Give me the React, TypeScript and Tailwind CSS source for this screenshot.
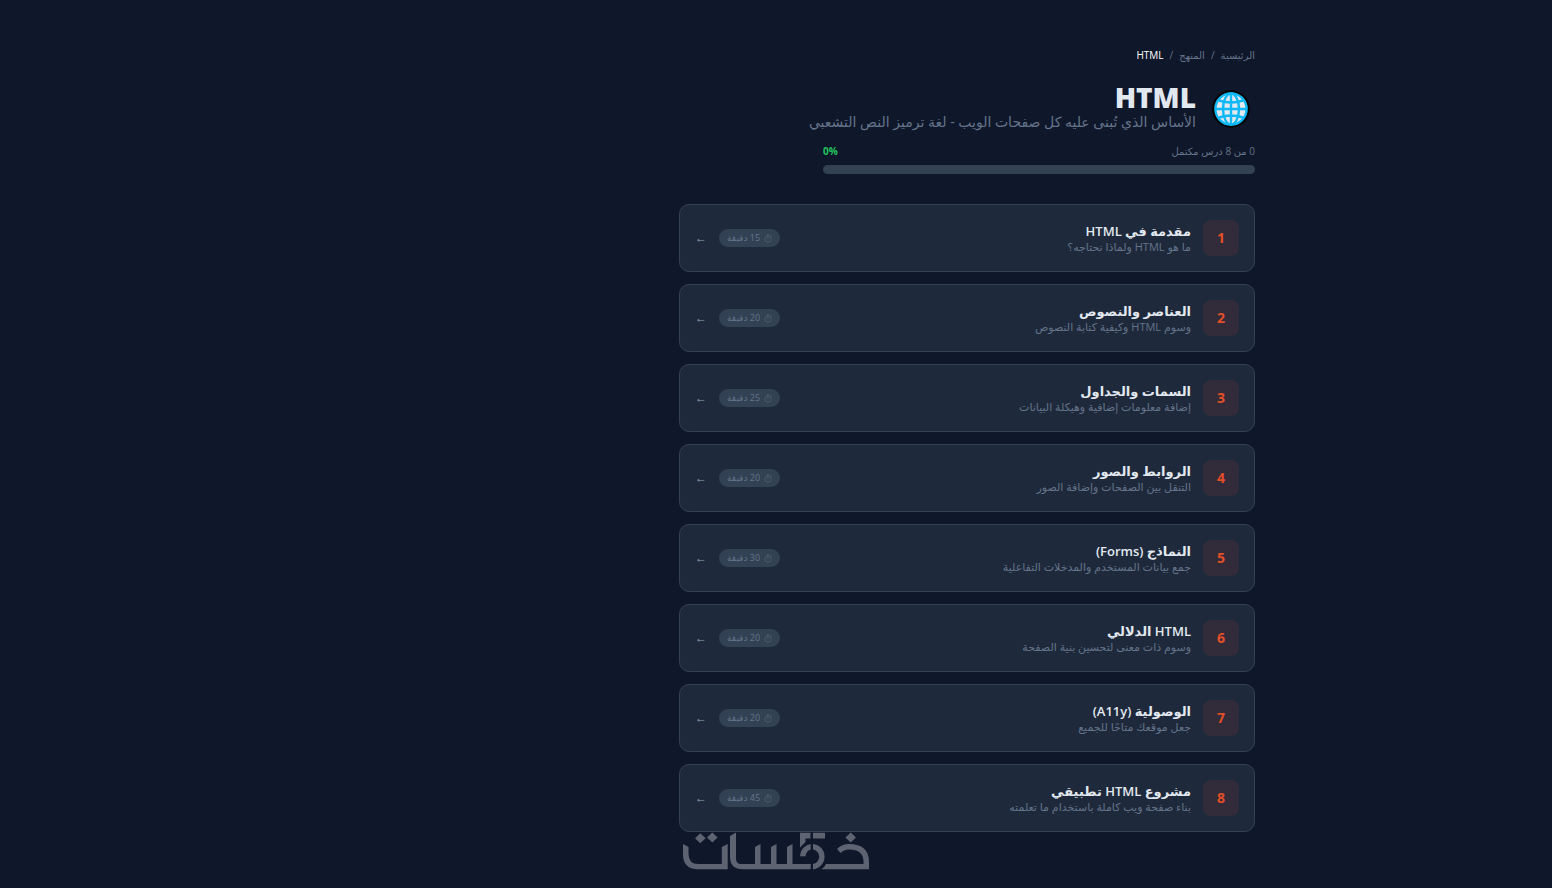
type Lesson = {
  id: number;
  title: string;
  description: string;
  minutes: number;
};

const lessons: Lesson[] = [
  { id: 1, title: "مقدمة في HTML", description: "ما هو HTML ولماذا نحتاجه؟", minutes: 15 },
  { id: 2, title: "العناصر والنصوص", description: "وسوم HTML وكيفية كتابة النصوص", minutes: 20 },
  { id: 3, title: "السمات والجداول", description: "إضافة معلومات إضافية وهيكلة البيانات", minutes: 25 },
  { id: 4, title: "الروابط والصور", description: "التنقل بين الصفحات وإضافة الصور", minutes: 20 },
  { id: 5, title: "النماذج (Forms)", description: "جمع بيانات المستخدم والمدخلات التفاعلية", minutes: 30 },
  { id: 6, title: "HTML الدلالي", description: "وسوم ذات معنى لتحسين بنية الصفحة", minutes: 20 },
  { id: 7, title: "الوصولية (A11y)", description: "جعل موقعك متاحًا للجميع", minutes: 20 },
  { id: 8, title: "مشروع HTML تطبيقي", description: "بناء صفحة ويب كاملة باستخدام ما تعلمته", minutes: 45 },
];

function GlobeIcon() {
  return (
    <svg viewBox="0 0 38 38" className="size-[38px]" aria-hidden="true">
      <circle cx="19" cy="19" r="18.8" fill="#000" />
      <circle cx="19" cy="19" r="16" fill="#e2e8f0" />
      <g fill="none" stroke="#0fb9f7" strokeWidth="2.4">
        <circle cx="19" cy="19" r="15.6" />
        <ellipse cx="19" cy="19" rx="8" ry="15.5" />
        <path d="M19 4v30M4 19h30M7 10.5q12 4 24 0M7 27.5q12-4 24 0" />
      </g>
    </svg>
  );
}

function StopwatchIcon() {
  return (
    <svg viewBox="0 0 8 9" className="h-[9px] w-2 text-[#56606f]" fill="none" stroke="currentColor" aria-hidden="true">
      <circle cx="4" cy="5" r="3.2" strokeWidth="0.8" />
      <path d="M3 0.6h2M4 0.6v1.2M4 3v2.4M6.6 1.4l0.9 0.9" strokeWidth="0.8" />
    </svg>
  );
}

function KhamsatLogo() {
  return (
    <svg viewBox="0 0 186 38" className="h-[38px] w-[186px]" fill="#5d6370" role="img" aria-label="خمسات">
      <path d="M17.3 1.2l5.3 5-5.3 5-5.3-5zM29.3.4l5.3 5-5.3 5-5.3-5zM167.7.4l5.3 5-5.3 5-5.3-5z" />
      <path d="M0 12l5.5 3v7q0 10 10 10h23.3V15l5.9-3v25.3H15Q0 37.3 0 22z" />
      <path d="M47 4l6-3.5V26q0 6 5 6h14V15l5.5-3v20H88V15l5.5-3v20H104V15l5.5-3v20h18.2v5.3H60Q47 37.3 47 25z" />
      <path d="M117 .8h10.5v5.7h-5V10l-5.5 5.500zM130 .8h12v5.700h-12z" />
      <path d="M127.700 12v5.400q-4.700 1.300-5.200 6.900H117q1-10.500 10.700-12.300z" />
      <path d="M130 12a12.700 12.700 0 0 1 0 25.300V32a7.400 7.400 0 0 0 0-14.600z" />
      <path d="M154 17q5-5 12-5 20 0 20 18v7.300h-47.500q3-2 4.500-5.300h37.500v-3q-.5-11.500-14.500-11.500-5 0-8.500 3.500z" />
    </svg>
  );
}

function LessonRow({ lesson }: { lesson: Lesson }) {
  return (
    <a href={`#lesson-${lesson.id}`} className="flex items-center gap-3 rounded-[10px] border border-[#334155] bg-[#1e293b] p-[15px]">
      <span className="flex size-9 shrink-0 items-center justify-center rounded-lg bg-[#322b39] text-sm font-bold text-[#e34f26]">
        {lesson.id}
      </span>
      <div className="min-w-0 flex-1">
        <h2 className="text-[13px] leading-[18px] font-semibold text-[#e2e8f0]">{lesson.title}</h2>
        <p className="text-[11px] leading-[14px] text-[#64748b]">{lesson.description}</p>
      </div>
      <span className="flex h-[18px] items-center gap-1 rounded-full bg-[#334155] px-2 text-[9px] text-[#64748b]">
        <StopwatchIcon />
        {lesson.minutes} دقيقة
      </span>
      <span className="font-['Liberation_Serif',serif] text-[12px] leading-4 text-[#94a3b8]">←</span>
    </a>
  );
}

export default function App() {
  return (
    <div dir="rtl" className="min-h-screen bg-[#0f172a] font-['Open_Sans','Noto_Sans','DejaVu_Sans',sans-serif] text-[#e2e8f0]">
      <main className="mx-auto max-w-[958px] pt-12">
        <nav className="flex items-center gap-1.5 text-[10px] leading-[14px] text-[#64748b]">
          <a href="#home">الرئيسية</a>
          <span>/</span>
          <a href="#curriculum">المنهج</a>
          <span>/</span>
          <span className="text-white">HTML</span>
        </nav>

        <header className="mt-[22px] flex items-center gap-4">
          <div className="flex w-[43px] justify-end">
            <GlobeIcon />
          </div>
          <div>
            <h1 className="text-[28px] leading-[26px] font-extrabold">HTML</h1>
            <p className="text-sm leading-6 text-[#64748b]">الأساس الذي تُبنى عليه كل صفحات الويب - لغة ترميز النص التشعبي</p>
          </div>
        </header>

        <div className="mt-[9px] w-full max-w-[432px]">
          <div className="flex justify-between text-[10px] leading-4 text-[#64748b]">
            <span>0 من 8 درس مكتمل</span>
            <span className="font-bold text-[#22c55e]">0%</span>
          </div>
          <div className="mt-1.5 h-[9px] rounded-full bg-[#334155]" />
        </div>

        <div className="mt-[30px] flex max-w-[576px] flex-col gap-3">
          {lessons.map((lesson) => (
            <LessonRow key={lesson.id} lesson={lesson} />
          ))}
        </div>

        <div className="flex max-w-[576px] justify-end px-1">
          <KhamsatLogo />
        </div>
      </main>
    </div>
  );
}
